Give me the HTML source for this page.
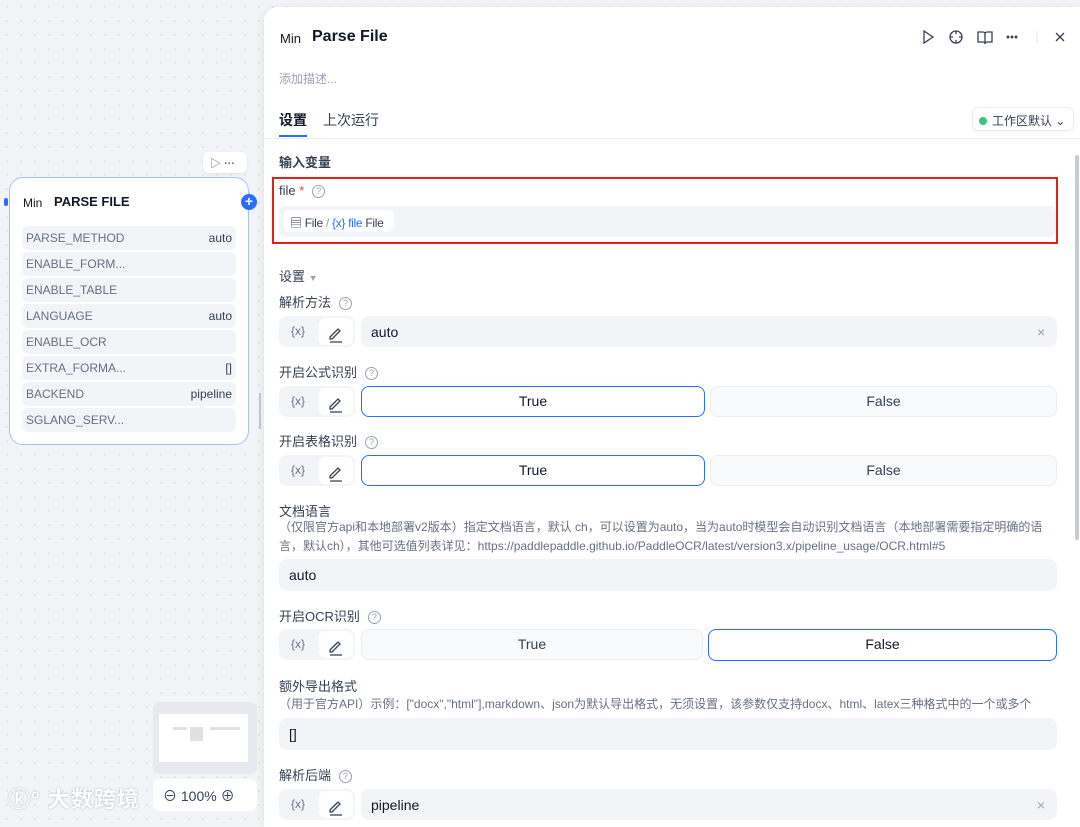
<!DOCTYPE html>
<html><head><meta charset="utf-8">
<style>
*{box-sizing:border-box;margin:0;padding:0}
body{width:1080px;height:817px;overflow:hidden;position:relative;font-family:"Liberation Sans","Noto Sans CJK SC",sans-serif;background-color:#f2f4f7;background-image:radial-gradient(#dde0e6 1px,transparent 1px);background-size:14px 14px;color:#101828}
.a{position:absolute}
.panel{position:absolute;left:264px;top:7px;width:820px;height:820px;background:#fff;border-radius:14px 0 0 0;box-shadow:-2px 0 8px rgba(0,0,0,.06)}
.lbl{position:absolute;left:279px;font-size:13px;color:#354052}
.q{display:inline-block;width:13px;height:13px;border:1px solid #98a2b3;border-radius:50%;font-size:9px;line-height:11px;text-align:center;color:#98a2b3;margin-left:8px;vertical-align:1px}
.vx{position:absolute;left:279px;width:76px;height:31px;background:#f2f4f7;border-radius:8px}
.vx .x{position:absolute;left:12px;top:8px;font-size:12px;color:#676f83}
.vx .p{position:absolute;left:40px;top:2px;width:34px;height:27px;background:#fff;border-radius:6px}
.inp{position:absolute;left:361px;width:696px;height:31px;background:#f2f4f7;border-radius:8px;font-size:14px;padding:8px 10px;color:#101828}
.btn{position:absolute;height:31px;border-radius:8px;font-size:14px;text-align:center;line-height:29px;color:#354052;border:1px solid #eaecf0;background:#f9fafb}
.sel{background:#fff;border:1.5px solid #296dff;color:#101828}
.desc{position:absolute;left:279px;font-size:12px;color:#676f83;line-height:19px}
.row{position:absolute;left:22px;width:214px;height:24px;background:#f2f4f7;border-radius:6px;font-size:12px;color:#676f83;padding:5px 4px;line-height:14px}
.row span{float:right;color:#354052}
</style></head><body>
<div class="a" style="left:203px;top:152px;width:44px;height:21px;background:#fff;border-radius:6px;box-shadow:0 1px 3px rgba(0,0,0,.08);font-size:11px;color:#676f83;padding:3px 7px">▷ <b>···</b></div>
<div class="a" style="left:9px;top:177px;width:240px;height:268px;background:#fff;border:1.5px solid #a9c2f5;border-radius:14px"></div>
<div class="a" style="left:4px;top:198px;width:4px;height:8px;background:#296dff;border-radius:2px"></div>
<div class="a" style="left:241px;top:194px;width:16px;height:16px;background:#296dff;border-radius:50%;color:#fff;font-size:14px;line-height:15px;text-align:center;font-weight:bold">+</div>
<div class="a" style="left:23px;top:196px;font-size:12px;color:#101828">Min</div>
<div class="a" style="left:54px;top:194px;font-size:13px;font-weight:bold">PARSE FILE</div>
<div class="row" style="top:226px">PARSE_METHOD<span>auto</span></div>
<div class="row" style="top:252px">ENABLE_FORM...</div>
<div class="row" style="top:278px">ENABLE_TABLE</div>
<div class="row" style="top:304px">LANGUAGE<span>auto</span></div>
<div class="row" style="top:330px">ENABLE_OCR</div>
<div class="row" style="top:356px">EXTRA_FORMA...<span>[]</span></div>
<div class="row" style="top:382px">BACKEND<span>pipeline</span></div>
<div class="row" style="top:408px">SGLANG_SERV...</div>
<div class="a" style="left:259px;top:393px;width:2px;height:36px;background:#c5cad3"></div>
<div class="a" style="left:153px;top:702px;width:104px;height:72px;background:#e7e9ee;border-radius:6px"></div>
<div class="a" style="left:159px;top:714px;width:89px;height:48px;background:#fff"></div>
<div class="a" style="left:190px;top:727px;width:13px;height:14px;background:#e0e0e0"></div>
<div class="a" style="left:173px;top:727px;width:14px;height:3px;background:#e0e0e0"></div>
<div class="a" style="left:210px;top:727px;width:30px;height:3px;background:#e0e0e0"></div>
<div class="a" style="left:153px;top:779px;width:104px;height:32px;background:#fff;border-radius:8px;font-size:14px;color:#354052;padding:7px 10px">⊖ 100% ⊕</div>
<div class="a" style="left:8px;top:782px;font-size:22px;color:#fff;text-shadow:0 0 2px #aab;font-weight:bold;letter-spacing:1px">ⓚ° 大数跨境</div>
<div class="panel"></div>
<div class="a" style="left:280px;top:31px;font-size:13px">Min</div>
<div class="a" style="left:312px;top:28px;font-size:16px;font-weight:bold">Parse File</div>
<svg class="a" style="left:920px;top:28px" width="150" height="18" viewBox="0 0 150 18" fill="none" stroke="#354052" stroke-width="1.3">
<path d="M4 3l9 6-9 6z"/><circle cx="36" cy="9" r="6"/><path d="M36 3v3M36 12v3M30 9h3M39 9h3"/>
<path d="M58 4h5a2 2 0 0 1 2 2v10a2 2 0 0 0-2-2h-5zM72 4h-5a2 2 0 0 0-2 2v10a2 2 0 0 1 2-2h5z"/>
<circle cx="88" cy="9" r=".8" fill="#354052"/><circle cx="92" cy="9" r=".8" fill="#354052"/><circle cx="96" cy="9" r=".8" fill="#354052"/>
<path d="M117 3v12" stroke="#eaecf0"/><path d="M136 5l8 8M144 5l-8 8"/></svg>
<div class="a" style="left:279px;top:70px;font-size:12px;color:#98a2b3">添加描述...</div>
<div class="a" style="left:279px;top:110px;font-size:14px;font-weight:bold">设置</div>
<div class="a" style="left:323px;top:110px;font-size:14px;color:#354052">上次运行</div>
<div class="a" style="left:279px;top:135px;width:28px;height:2px;background:#296dff"></div>
<div class="a" style="left:264px;top:138px;width:816px;height:1px;background:#eaecf0"></div>
<div class="a" style="left:972px;top:107px;width:102px;height:24px;border:1px solid #eaecf0;border-radius:6px;font-size:12px;color:#354052;padding:4px 6px;white-space:nowrap;box-shadow:0 1px 2px rgba(0,0,0,.05)"><span style="display:inline-block;width:8px;height:8px;border-radius:50%;background:#3bc47f;margin-right:5px"></span>工作区默认 ⌄</div>
<div class="a" style="left:1075px;top:155px;width:4px;height:385px;background:#c8cbd1;border-radius:2px"></div>
<div class="a" style="left:279px;top:152px;font-size:13px;font-weight:bold;color:#354052">输入变量</div>
<div class="a" style="left:272px;top:177px;width:786px;height:67px;border:2px solid #e5201c"></div>
<div class="a" style="left:279px;top:183px;font-size:13px;color:#354052">file <span style="color:#f04438">*</span><span class="q">?</span></div>
<div class="a" style="left:279px;top:206px;width:777px;height:31px;background:#f2f4f7;border-radius:6px"></div>
<div class="a" style="left:284px;top:210px;width:110px;height:22px;background:#fff;border-radius:6px;font-size:12px;color:#354052;padding:4px 6px;white-space:nowrap;letter-spacing:-0.3px">▤ File <span style="color:#98a2b3">/</span> <span style="color:#296dff">{x} file</span> File</div>
<div class="a" style="left:279px;top:266px;font-size:13px;color:#354052">设置 <span style="color:#98a2b3;font-size:9px">▼</span></div>
<div class="lbl" style="top:292px">解析方法<span class="q">?</span></div>
<div class="vx" style="top:316px"><span class="x">{x}</span><span class="p"></span></div>
<div class="inp" style="top:316px">auto<span style="float:right;color:#98a2b3;margin-right:2px">×</span></div>
<div class="lbl" style="top:362px">开启公式识别<span class="q">?</span></div>
<div class="vx" style="top:386px"><span class="x">{x}</span><span class="p"></span></div>
<div class="btn sel" style="top:386px;left:361px;width:344px">True</div>
<div class="btn" style="top:386px;left:710px;width:347px">False</div>
<div class="lbl" style="top:431px">开启表格识别<span class="q">?</span></div>
<div class="vx" style="top:455px"><span class="x">{x}</span><span class="p"></span></div>
<div class="btn sel" style="top:455px;left:361px;width:344px">True</div>
<div class="btn" style="top:455px;left:710px;width:347px">False</div>
<div class="lbl" style="top:501px">文档语言</div>
<div class="desc" style="top:518px;width:780px">（仅限官方api和本地部署v2版本）指定文档语言，默认 ch，可以设置为auto，当为auto时模型会自动识别文档语言（本地部署需要指定明确的语言，默认ch），其他可选值列表详见：https://paddlepaddle.github.io/PaddleOCR/latest/version3.x/pipeline_usage/OCR.html#5</div>
<div class="inp" style="top:559px;left:279px;width:778px;height:32px">auto</div>
<div class="lbl" style="top:606px">开启OCR识别<span class="q">?</span></div>
<div class="vx" style="top:629px"><span class="x">{x}</span><span class="p"></span></div>
<div class="btn" style="top:629px;left:361px;width:342px">True</div>
<div class="btn sel" style="top:629px;left:708px;width:349px;height:32px">False</div>
<div class="lbl" style="top:676px">额外导出格式</div>
<div class="desc" style="top:695px;white-space:nowrap">（用于官方API）示例：["docx","html"],markdown、json为默认导出格式，无须设置，该参数仅支持docx、html、latex三种格式中的一个或多个</div>
<div class="inp" style="top:718px;left:279px;width:778px;height:32px">[]</div>
<div class="lbl" style="top:765px">解析后端<span class="q">?</span></div>
<div class="vx" style="top:789px"><span class="x">{x}</span><span class="p"></span></div>
<div class="inp" style="top:789px">pipeline<span style="float:right;color:#98a2b3;margin-right:2px">×</span></div>
<svg class="a" style="left:0;top:0;pointer-events:none" width="1080" height="817" fill="none" stroke="#354052" stroke-width="1.3">
<g id="pen"><path d="M330 337l8-8 2 2-8 8h-2z M330 342h12"/></g>
<use href="#pen" y="70"/><use href="#pen" y="139"/><use href="#pen" y="313"/><use href="#pen" y="473"/>
</svg>
</body></html>
